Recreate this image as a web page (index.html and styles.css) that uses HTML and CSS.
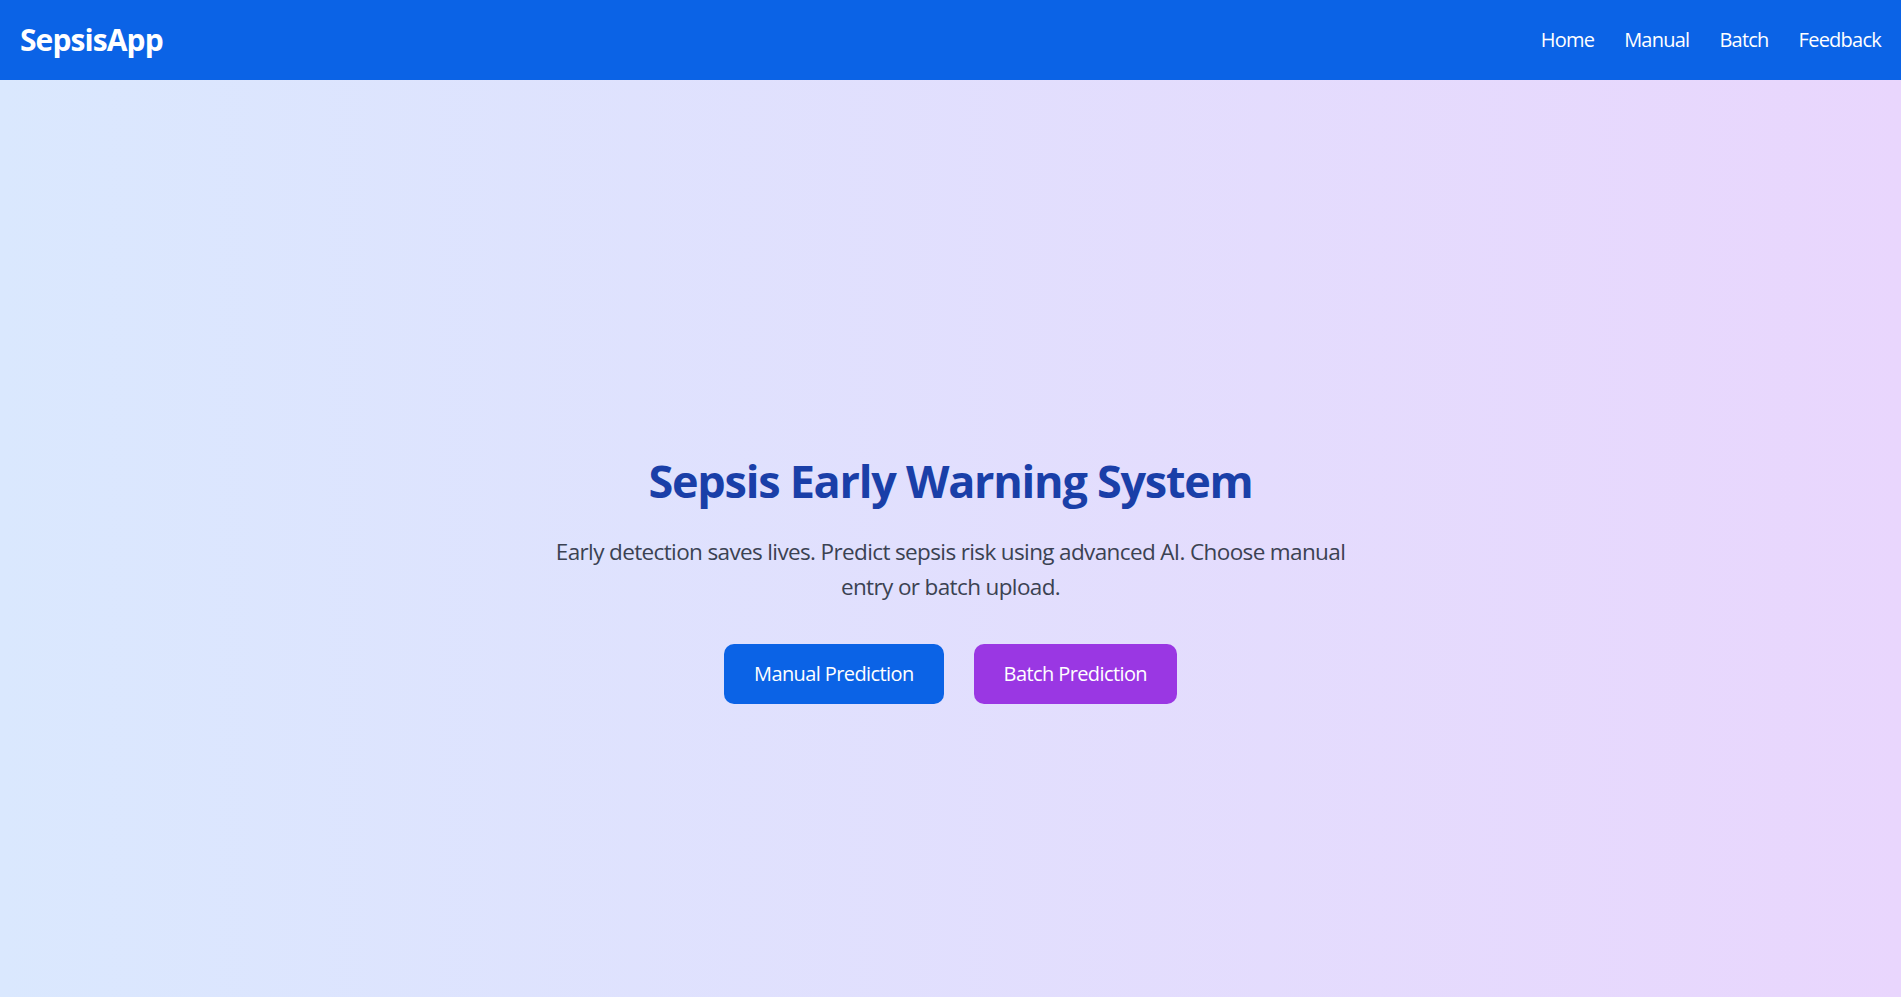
FILE: index.html
```html
<!DOCTYPE html>
<html lang="en">
<head>
<meta charset="utf-8">
<title>SepsisApp</title>
<link rel="stylesheet" href="styles.css">
</head>
<body>
<nav class="navbar">
  <a class="brand" href="#">SepsisApp</a>
  <ul class="nav-links">
    <li><a href="#">Home</a></li>
    <li><a href="#">Manual</a></li>
    <li><a href="#">Batch</a></li>
    <li><a href="#">Feedback</a></li>
  </ul>
</nav>
<main class="hero">
  <h1 class="hero-title">Sepsis Early Warning System</h1>
  <p class="hero-text">Early detection saves lives. Predict sepsis risk using advanced AI. Choose manual entry or batch upload.</p>
  <div class="hero-actions">
    <a class="btn btn-blue" href="#">Manual Prediction</a>
    <a class="btn btn-purple" href="#">Batch Prediction</a>
  </div>
</main>
</body>
</html>
```

FILE: styles.css
```css
html, body {
  margin: 0;
  padding: 0;
}
body {
  font-family: "Open Sans", "Noto Sans", "Liberation Sans", sans-serif;
  color: #111827;
  letter-spacing: -0.025em;
}
a {
  text-decoration: none;
  color: inherit;
}
.navbar {
  height: 80px;
  background: #0b63e6;
  display: flex;
  align-items: center;
  justify-content: space-between;
  padding: 0 20px;
  box-sizing: border-box;
}
.brand {
  color: #fff;
  font-size: 30px;
  font-weight: 700;
  line-height: 40px;
  letter-spacing: -0.03em;
}
.nav-links {
  list-style: none;
  margin: 0;
  padding: 0;
  display: flex;
  gap: 30px;
}
.nav-links a {
  color: #fff;
  font-size: 20px;
  line-height: 30px;
  letter-spacing: -0.038em;
}
.hero {
  min-height: 997px;
  background: linear-gradient(to right, #dae8fe, #e9d6fd);
  display: flex;
  flex-direction: column;
  align-items: center;
  justify-content: center;
  text-align: center;
  padding: 0 20px;
  box-sizing: border-box;
}
.hero-title {
  margin: 2px 0 28px;
  font-size: 45px;
  line-height: 50px;
  font-weight: 700;
  color: #1a3fa8;
  letter-spacing: -0.028em;
}
.hero-text {
  margin: 0 0 40px;
  max-width: 810px;
  font-size: 22.5px;
  line-height: 35px;
  color: #3b4252;
  letter-spacing: -0.028em;
}
.hero-actions {
  display: flex;
  gap: 30px;
}
.btn {
  display: inline-block;
  padding: 15px 30px;
  font-size: 20px;
  line-height: 30px;
  color: #fff;
  border-radius: 10px;
  letter-spacing: -0.03em;
}
.btn-blue {
  background: #0b63e6;
}
.btn-purple {
  background: #9a37e3;
}
```
